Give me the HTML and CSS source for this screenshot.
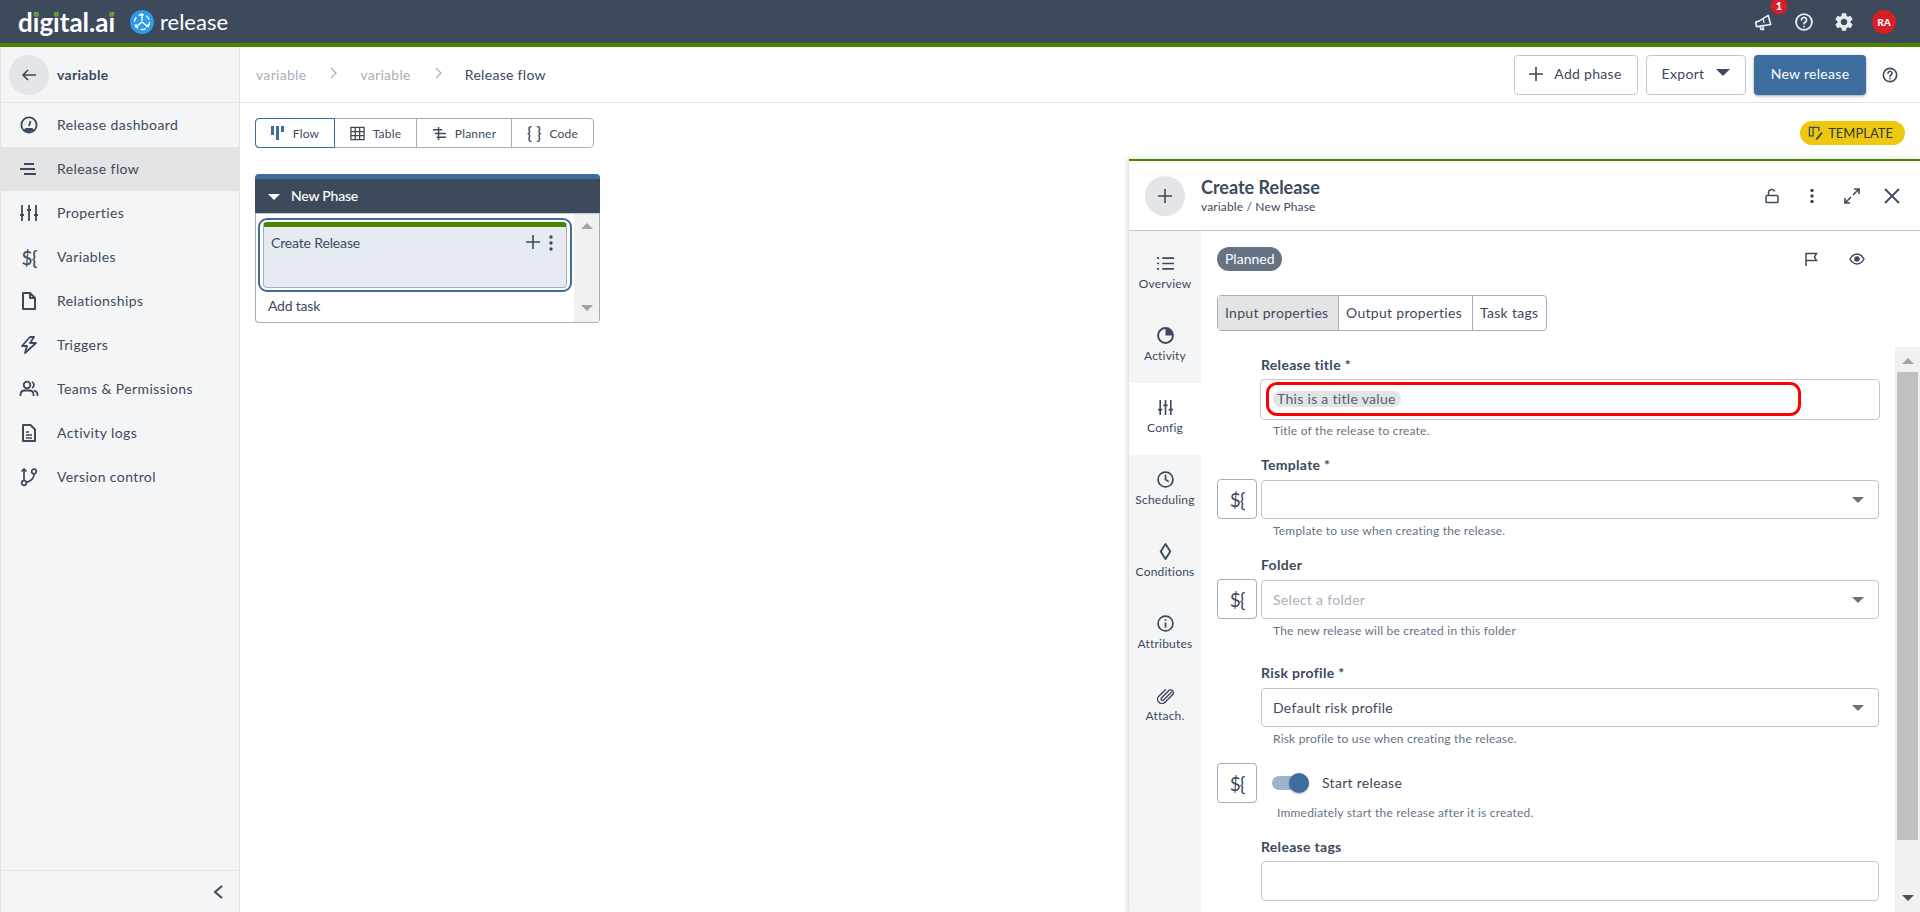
FILE: index.html
```html
<!DOCTYPE html>
<html lang="en">
<head>
    <meta charset="UTF-8">
    <meta name="viewport" content="width=device-width, initial-scale=1.0">
    <title>Release flow</title>
    <link rel="stylesheet" href="styles.css">
</head>
<body>
    <header class="topbar">
        <div class="brand">
            <span class="brand-name">d<span class="i">i</span>g<span class="i">i</span>tal.a<span class="i">i</span></span>
            <svg class="brand-icon" viewBox="0 0 24 24" width="24" height="24">
                <circle cx="12" cy="12" r="12" fill="#2d9bea"/>
                <g fill="none" stroke="#fff" stroke-width="1.4">
                    <circle cx="12" cy="12" r="7.5" stroke-dasharray="5 2.9"/>
                    <path d="M12 4v7M12 12l-5 4M12 12l5 4"/>
                </g>
                <path d="M12 3l2.2 2.6H9.800zM5 17.500l3.300-.6-1.800-2.800zM19 17.500l-3.300-.6 1.800-2.800z" fill="#fff"/>
            </svg>
            <span class="brand-product">release</span>
        </div>
        <div class="topbar-actions">
            <span class="topbar-icon notify">
                <svg viewBox="0 0 24 24" width="20" height="20" fill="none" stroke="#e8ecf1" stroke-width="2" stroke-linejoin="round"><path d="M2 12l4-1 11-7 3 11-13 2-4 .5z"/><path d="M7 17l1.500 4h3l-1.500-4.500"/><path d="M11 8l1 5" stroke-width="1.500"/></svg>
                <span class="notify-badge">1</span>
            </span>
            <span class="topbar-icon">
                <svg viewBox="0 0 24 24" width="20" height="20" fill="none" stroke="#e8ecf1" stroke-width="2.200" stroke-linecap="round"><circle cx="12" cy="12" r="9.500"/><path d="M9 9.500a3 3 0 1 1 4.500 2.600c-1 .6-1.500 1.100-1.500 2.100"/><path d="M12 17.500v.1"/></svg>
            </span>
            <span class="topbar-icon">
                <svg viewBox="0 0 24 24" width="22" height="22" fill="#e8ecf1"><path d="M19.140 12.940c.04-.3.06-.61.06-.94 0-.32-.02-.64-.07-.94l2.030-1.580a.49.49 0 0 0 .12-.61l-1.920-3.320a.488.488 0 0 0-.59-.22l-2.390.96c-.5-.38-1.030-.7-1.620-.94l-.36-2.540a.484.484 0 0 0-.48-.41h-3.840c-.24 0-.43.17-.47.41l-.36 2.540c-.59.24-1.130.57-1.620.94l-2.390-.96c-.22-.08-.47 0-.59.22L2.740 8.870c-.12.21-.08.47.12.61l2.030 1.580c-.05.3-.09.63-.09.94s.02.64.07.94l-2.030 1.580a.49.49 0 0 0-.12.61l1.920 3.320c.12.22.37.29.59.22l2.390-.96c.5.38 1.030.7 1.620.94l.36 2.540c.05.24.24.41.48.41h3.840c.24 0 .44-.17.47-.41l.36-2.540c.59-.24 1.130-.56 1.620-.94l2.390.96c.22.08.47 0 .59-.22l1.920-3.320c.12-.22.07-.47-.12-.61l-2.010-1.580zM12 15.600c-1.980 0-3.600-1.620-3.600-3.600s1.620-3.600 3.600-3.600 3.600 1.620 3.600 3.600-1.620 3.600-3.600 3.600z"/></svg>
            </span>
            <span class="avatar">RA</span>
        </div>
    </header>

    <div class="layout">
        <nav class="sidebar">
            <div class="sidebar-head">
                <span class="back-btn">
                    <svg viewBox="0 0 16 16" width="16" height="16" fill="none" stroke="#3d4a5c" stroke-width="1.600"><path d="M15 8H2M7 3L2 8l5 5"/></svg>
                </span>
                <span class="sidebar-title">variable</span>
            </div>
            <ul class="nav-list">
                <li class="nav-item">
                    <svg viewBox="0 0 20 20" width="20" height="20" fill="none" stroke="#3d4a5c" stroke-width="1.800"><circle cx="10" cy="10" r="7.600"/><path d="M10 11l1.500-5M5.500 9h.1M7 6h.1M14.500 9h.1"/><path d="M4 15a8 6 0 0 0 12 0l-3-2H7z" fill="#3d4a5c" stroke="none"/></svg>
                    <span>Release dashboard</span>
                </li>
                <li class="nav-item active">
                    <svg viewBox="0 0 20 20" width="20" height="20" fill="none" stroke="#3d4a5c" stroke-width="2"><path d="M5 5h10M1 10h15M5 15h12"/></svg>
                    <span>Release flow</span>
                </li>
                <li class="nav-item">
                    <svg viewBox="0 0 20 20" width="20" height="20" fill="none" stroke="#3d4a5c" stroke-width="1.800"><path d="M3 2v16M10 2v16M17 2v16M1 12h4M8 7h4M15 12h4"/></svg>
                    <span>Properties</span>
                </li>
                <li class="nav-item">
                    <span class="var-mark">${</span>
                    <span>Variables</span>
                </li>
                <li class="nav-item">
                    <svg viewBox="0 0 20 20" width="20" height="20" fill="none" stroke="#3d4a5c" stroke-width="2" stroke-linejoin="round"><path d="M4 2h7l5 5v11H4z"/><path d="M11 2v5h5"/></svg>
                    <span>Relationships</span>
                </li>
                <li class="nav-item">
                    <svg viewBox="0 0 20 20" width="20" height="20" fill="none" stroke="#3d4a5c" stroke-width="1.800" stroke-linejoin="round"><path d="M11 2L3 11h5l-2 7 11-10h-6l4-6z"/></svg>
                    <span>Triggers</span>
                </li>
                <li class="nav-item">
                    <svg viewBox="0 0 20 20" width="20" height="20" fill="none" stroke="#3d4a5c" stroke-width="1.800"><circle cx="8" cy="6" r="3.300"/><path d="M1.500 17v-2a4 4 0 0 1 4-3.500h5a4 4 0 0 1 4 3.500v2M13 3a3.300 3.300 0 0 1 0 6M15 11.700a4 4 0 0 1 3.500 3.300v2"/></svg>
                    <span>Teams &amp; Permissions</span>
                </li>
                <li class="nav-item">
                    <svg viewBox="0 0 20 20" width="20" height="20" fill="none" stroke="#3d4a5c" stroke-width="2" stroke-linejoin="round"><path d="M4 2h7.500L16 6.500V18H4z"/><path d="M7 9h3M7 12h6M7 15h6" stroke-width="1.500"/></svg>
                    <span>Activity logs</span>
                </li>
                <li class="nav-item">
                    <svg viewBox="0 0 20 20" width="20" height="20" fill="none" stroke="#3d4a5c" stroke-width="1.700"><circle cx="5" cy="16" r="2.300"/><circle cx="15" cy="4.500" r="2.300"/><path d="M5 13.700V2M2.500 4.500L5 2l2.500 2.500M15 7c0 5-3 7-7.600 8.500"/></svg>
                    <span>Version control</span>
                </li>
            </ul>
            <div class="sidebar-foot">
                <svg viewBox="0 0 12 16" width="12" height="16" fill="none" stroke="#3d4a5c" stroke-width="2"><path d="M10 2L3 8l7 6"/></svg>
            </div>
        </nav>

        <main class="main">
            <div class="crumbbar">
                <div class="crumbs">
                    <span class="crumb">variable</span>
                    <svg class="crumb-sep" viewBox="0 0 8 12" width="8" height="12" fill="none" stroke="#a9b0ba" stroke-width="1.300"><path d="M1 1l5 5-5 5"/></svg>
                    <span class="crumb">variable</span>
                    <svg class="crumb-sep" viewBox="0 0 8 12" width="8" height="12" fill="none" stroke="#a9b0ba" stroke-width="1.300"><path d="M1 1l5 5-5 5"/></svg>
                    <span class="crumb current">Release flow</span>
                </div>
                <div class="actions">
                    <button class="btn add-phase">
                        <svg viewBox="0 0 16 16" width="16" height="16" fill="none" stroke="#3d4a5c" stroke-width="1.600"><path d="M8 1v14M1 8h14"/></svg>
                        Add phase
                    </button>
                    <button class="btn export">Export <span class="caret big"></span></button>
                    <button class="btn primary">New release</button>
                    <svg class="help-icon" viewBox="0 0 24 24" width="16" height="16" fill="none" stroke="#3d4a5c" stroke-width="2.400" stroke-linecap="round"><circle cx="12" cy="12" r="10"/><path d="M9 9.500a3 3 0 1 1 4.500 2.600c-1 .6-1.500 1.100-1.500 2.100"/><path d="M12 17.500v.1"/></svg>
                </div>
            </div>

            <div class="viewbar">
                <div class="view-switch">
                    <span class="view-tab selected">
                        <svg viewBox="0 0 14 16" width="14" height="16" fill="#3d6c9e"><path d="M0 1h3v9H0zM5 1h3v14H5zM10 1h3v6h-3z"/></svg>
                        Flow
                    </span>
                    <span class="view-tab">
                        <svg viewBox="0 0 16 16" width="15" height="15" fill="none" stroke="#3d4a5c" stroke-width="1.400"><path d="M1 1.500h14v13H1zM1 6h14M1 10.300h14M5.600 1.500v13M10.300 1.500v13"/></svg>
                        Table
                    </span>
                    <span class="view-tab">
                        <svg viewBox="0 0 16 16" width="15" height="15" fill="none" stroke="#3d4a5c" stroke-width="1.500"><path d="M7 1v14M1 4h10M3 8h12M5 12h10"/></svg>
                        Planner
                    </span>
                    <span class="view-tab">
                        <span class="braces">{ }</span>
                        Code
                    </span>
                </div>
                <span class="template-badge">
                    <svg viewBox="0 0 16 16" width="15" height="15" fill="none" stroke="#3d4a5c" stroke-width="1.400"><path d="M1.500 1.500h4v9h-4zM5.500 1.500h6v4"/><path d="M14.500 6L9 12.500l-1 2.500 2.500-1L15.500 8z" fill="#3d4a5c" stroke="none"/></svg>
                    TEMPLATE
                </span>
            </div>

            <div class="workspace">
                <section class="phase">
                    <div class="phase-head">
                        <span class="phase-caret"></span>
                        <span>New Phase</span>
                    </div>
                    <div class="phase-body">
                        <div class="phase-tasks">
                            <div class="task-focus">
                                <div class="task-card">
                                    <span>Create Release</span>
                                    <span class="task-tools">
                                        <svg viewBox="0 0 14 14" width="14" height="14" fill="none" stroke="#3d4a5c" stroke-width="1.600"><path d="M7 0v14M0 7h14"/></svg>
                                        <svg viewBox="0 0 4 16" width="4" height="16" fill="#3d4a5c"><circle cx="2" cy="2" r="1.700"/><circle cx="2" cy="8" r="1.700"/><circle cx="2" cy="14" r="1.700"/></svg>
                                    </span>
                                </div>
                            </div>
                            <div class="add-task">Add task</div>
                        </div>
                        <div class="phase-scroll">
                            <span class="arrow-up"></span>
                            <span class="arrow-down"></span>
                        </div>
                    </div>
                </section>

                <aside class="drawer">
                    <div class="drawer-head">
                        <span class="drawer-badge">
                            <svg viewBox="0 0 16 16" width="16" height="16" fill="none" stroke="#3d4a5c" stroke-width="1.600"><path d="M8 1v14M1 8h14"/></svg>
                        </span>
                        <div class="drawer-titles">
                            <div class="drawer-title">Create Release</div>
                            <div class="drawer-sub">variable / New Phase</div>
                        </div>
                        <div class="drawer-tools">
                            <svg viewBox="0 0 16 16" width="16" height="16" fill="none" stroke="#3d4a5c" stroke-width="1.500"><rect x="2" y="7.500" width="12" height="7" rx="1"/><path d="M4.500 7.500V4.500a3.200 3.200 0 0 1 6.200-1"/></svg>
                            <svg viewBox="0 0 16 16" width="16" height="16" fill="#3d4a5c"><circle cx="8" cy="2.500" r="1.700"/><circle cx="8" cy="8" r="1.700"/><circle cx="8" cy="13.500" r="1.700"/></svg>
                            <svg viewBox="0 0 16 16" width="16" height="16" fill="none" stroke="#3d4a5c" stroke-width="1.600"><path d="M9 7l6-6M10 1h5v5M7 9l-6 6M1 10v5h5"/></svg>
                            <svg viewBox="0 0 16 16" width="16" height="16" fill="none" stroke="#3d4a5c" stroke-width="1.800"><path d="M1 1l14 14M15 1L1 15"/></svg>
                        </div>
                    </div>
                    <div class="drawer-main">
                        <div class="side-tabs">
                            <div class="side-tab">
                                <svg viewBox="0 0 16 16" width="17" height="17" fill="none" stroke="#3d4a5c" stroke-width="1.600"><path d="M5 3h11M5 8h11M5 13h11M0 3h2M0 8h2M0 13h2"/></svg>
                                Overview
                            </div>
                            <div class="side-tab">
                                <svg viewBox="0 0 16 16" width="17" height="17" fill="none" stroke="#3d4a5c" stroke-width="1.800"><circle cx="8" cy="8" r="7"/><path d="M8 1a7 7 0 0 1 7 7H8z" fill="#3d4a5c" stroke="none"/></svg>
                                Activity
                            </div>
                            <div class="side-tab current">
                                <svg viewBox="0 0 16 16" width="17" height="17" fill="none" stroke="#3d4a5c" stroke-width="1.500"><path d="M3 1v14M8 1v14M13 1v14M1 10h4M6 6h4M11 10h4"/></svg>
                                Config
                            </div>
                            <div class="side-tab">
                                <svg viewBox="0 0 16 16" width="17" height="17" fill="none" stroke="#3d4a5c" stroke-width="1.600"><circle cx="8" cy="8" r="7"/><path d="M8 3.500V8l3 2"/></svg>
                                Scheduling
                            </div>
                            <div class="side-tab">
                                <svg viewBox="0 0 16 16" width="17" height="17" fill="none" stroke="#3d4a5c" stroke-width="1.800" stroke-linejoin="round"><path d="M8 1l4.500 7L8 15 3.500 8z"/></svg>
                                Conditions
                            </div>
                            <div class="side-tab">
                                <svg viewBox="0 0 16 16" width="17" height="17" fill="none" stroke="#3d4a5c" stroke-width="1.600"><circle cx="8" cy="8" r="7"/><path d="M8 7v5M8 4v1.500"/></svg>
                                Attributes
                            </div>
                            <div class="side-tab">
                                <svg viewBox="0 0 16 16" width="17" height="17" fill="none" stroke="#3d4a5c" stroke-width="1.300" stroke-linecap="round"><path d="M13.500 5L6 12.500a1.500 1.500 0 0 1-2-2L11.500 3a2.700 2.700 0 0 1 3.500 3.800L7.500 14.300a4 4 0 0 1-5.800-5.600L8 2.500"/></svg>
                                Attach.
                            </div>
                        </div>
                        <div class="drawer-content">
                            <div class="status-row">
                                <span class="status-pill">Planned</span>
                                <span class="status-tools">
                                    <svg viewBox="0 0 16 16" width="16" height="16" fill="none" stroke="#3d4a5c" stroke-width="1.500"><path d="M3 15V2.500h10.500l-2 3.500 2 3.500H3"/></svg>
                                    <svg viewBox="0 0 16 16" width="16" height="16" fill="none" stroke="#3d4a5c" stroke-width="1.500"><path d="M1 8c2-3.500 4.500-5 7-5s5 1.500 7 5c-2 3.500-4.500 5-7 5s-5-1.500-7-5z"/><circle cx="8" cy="8" r="2" fill="#3d4a5c"/></svg>
                                </span>
                            </div>
                            <div class="prop-tabs">
                                <span class="prop-tab selected">Input properties</span>
                                <span class="prop-tab">Output properties</span>
                                <span class="prop-tab">Task tags</span>
                            </div>
                            <div class="form-area">
                                <form class="form">
                                    <div class="field">
                                        <label class="field-label">Release title *</label>
                                        <div class="title-input">
                                            <div class="title-mark"><span class="value-chip">This is a title value</span></div>
                                        </div>
                                        <div class="field-help">Title of the release to create.</div>
                                    </div>
                                    <div class="field">
                                        <label class="field-label">Template *</label>
                                        <span class="var-btn">${</span>
                                        <div class="select-box"><span class="caret"></span></div>
                                        <div class="field-help">Template to use when creating the release.</div>
                                    </div>
                                    <div class="field">
                                        <label class="field-label">Folder</label>
                                        <span class="var-btn">${</span>
                                        <div class="select-box"><span class="placeholder">Select a folder</span><span class="caret"></span></div>
                                        <div class="field-help">The new release will be created in this folder</div>
                                    </div>
                                    <div class="field risk">
                                        <label class="field-label">Risk profile *</label>
                                        <div class="select-box"><span>Default risk profile</span><span class="caret"></span></div>
                                        <div class="field-help">Risk profile to use when creating the release.</div>
                                    </div>
                                    <div class="field start">
                                        <span class="var-btn">${</span>
                                        <div class="switch-row">
                                            <span class="switch"><span class="switch-knob"></span></span>
                                            <span class="switch-label">Start release</span>
                                        </div>
                                        <div class="field-help start-help">Immediately start the release after it is created.</div>
                                    </div>
                                    <div class="field">
                                        <label class="field-label">Release tags</label>
                                        <div class="tags-input"></div>
                                    </div>
                                </form>
                                <div class="form-scroll">
                                    <span class="arrow-up"></span>
                                    <span class="scroll-thumb"></span>
                                    <span class="arrow-down dark"></span>
                                </div>
                            </div>
                        </div>
                    </div>
                </aside>
            </div>
        </main>
    </div>
</body>
</html>
```

FILE: styles.css
```css
* { box-sizing: border-box; }
html, body { height: 100%; }
body { margin: 0; height: 912px; overflow: hidden; font-family: Lato, "Open Sans", sans-serif; font-size: 14px; color: #3d4a5c; background: #fff; letter-spacing: 0.3px; }
ul { list-style: none; margin: 0; padding: 0; }
svg { flex: none; display: block; }

/* top bar */
.topbar { display: flex; justify-content: space-between; height: 47px; background: #3d4a5c; border-bottom: 4px solid #4c8400; }
.brand { display: flex; align-items: center; padding-left: 18px; color: #fff; }
.brand-name { font-size: 26px; font-weight: 700; letter-spacing: 0; width: 100px; line-height: 30px; }
.brand-name .i { position: relative; }
.brand-name .i::after { content: ""; position: absolute; left: 50%; top: 6px; width: 5px; height: 5px; margin-left: -2.5px; border-radius: 50%; background: #5d9a2d; }
.brand-icon { margin-left: 12px; }
.brand-product { margin-left: 6px; font-size: 22px; letter-spacing: 0; line-height: 30px; }
.topbar-actions { display: flex; align-items: center; padding-right: 24px; }
.topbar-icon { position: relative; display: flex; justify-content: center; width: 40px; }
.notify-badge { position: absolute; left: 27px; top: -14px; width: 16px; height: 16px; border-radius: 50%; background: #d61f26; color: #fff; font-size: 11px; font-weight: 900; line-height: 16px; text-align: center; letter-spacing: 0; box-shadow: 0 0 4px rgba(214, 31, 38, 0.6); }
.avatar { width: 24px; height: 24px; margin-left: 8px; border-radius: 50%; background: #d61f26; color: #fff; font-size: 10px; font-weight: 900; line-height: 24px; text-align: center; letter-spacing: 0; }

/* layout */
.layout { display: flex; height: 865px; }
.sidebar { display: flex; flex-direction: column; width: 240px; background: #f3f5f7; border-left: 1px solid #e3e5e8; border-right: 1px solid #e3e5e8; }
.sidebar-head { display: flex; align-items: center; height: 56px; padding-left: 8px; border-bottom: 1px solid #e3e5e8; }
.back-btn { display: flex; align-items: center; justify-content: center; width: 40px; height: 40px; border-radius: 50%; background: #e3e5e8; }
.sidebar-title { margin-left: 8px; font-weight: 700; }
.nav-list { flex: 1; }
.nav-item { display: flex; align-items: center; gap: 18px; height: 44px; padding-left: 18px; letter-spacing: 0.4px; }
.nav-item span:last-child { position: relative; top: -1px; }
.nav-item.active { background: #e3e4e6; }
.var-mark { width: 20px; font-size: 19px; font-weight: 500; text-align: center; letter-spacing: -1px; }
.sidebar-foot { display: flex; justify-content: flex-end; align-items: center; height: 42px; padding-right: 15px; border-top: 1px solid #e3e5e8; }

/* main column */
.main { display: flex; flex-direction: column; flex: 1; min-width: 0; }
.crumbbar { display: flex; justify-content: space-between; align-items: center; height: 56px; padding: 0 22px 0 16px; border-bottom: 1px solid #e3e5e8; }
.crumbs { display: flex; align-items: center; }
.crumb { color: #a9b0ba; }
.crumb.current { color: #3d4a5c; }
.crumb-sep { margin: 0 22px 0 24px; position: relative; top: -2px; }
.actions { display: flex; align-items: center; gap: 8px; }
.btn { display: flex; align-items: center; justify-content: center; height: 40px; padding: 0 0 2px; border: 1px solid #c3c8cf; border-radius: 4px; background: #fff; color: #3d4a5c; font: inherit; letter-spacing: 0.3px; }
.btn.add-phase { gap: 10px; width: 124px; padding-right: 2px; }
.btn.export { gap: 12px; width: 100px; }
.btn.primary { width: 112px; border: 0; background: #3d6c9e; color: #fff; box-shadow: 0 1px 3px rgba(61, 74, 92, 0.5); }
.help-icon { margin-left: 8px; }
.caret { width: 0; height: 0; margin-left: auto; border-left: 6px solid transparent; border-right: 6px solid transparent; border-top: 6px solid #707070; }
.caret.big { position: relative; top: -1px; margin-left: 0; border-left-width: 7px; border-right-width: 7px; border-top: 7px solid #3d4a5c; }

.viewbar { display: flex; justify-content: space-between; align-items: center; height: 56px; padding: 4px 15px 0 15px; }
.view-switch { display: flex; height: 30px; border: 1px solid #a5adb9; border-radius: 4px; }
.view-tab { display: flex; align-items: center; justify-content: center; gap: 8px; font-size: 12px; letter-spacing: 0.2px; border-left: 1px solid #a5adb9; }
.view-tab:nth-child(1) { width: 80px; margin: -1px 0 -1px -1px; border: 1px solid #3d6c9e; border-radius: 4px 0 0 4px; }
.view-tab:nth-child(2) { width: 81px; border-left: 0; }
.view-tab:nth-child(3) { width: 95px; }
.view-tab:nth-child(4) { width: 82px; }
.braces { font-size: 17px; line-height: 16px; letter-spacing: 0; font-weight: 500; }
.template-badge { display: flex; align-items: center; gap: 5px; height: 24px; padding: 0 12px 0 8px; border-radius: 12px; background: #eec80f; color: #2f3a28; font-size: 13px; letter-spacing: 0; }

.workspace { display: flex; justify-content: space-between; align-items: flex-start; flex: 1; min-height: 0; padding-left: 15px; }

/* phase column */
.phase { width: 345px; margin-top: 15px; }
.phase-head { display: flex; align-items: center; gap: 11px; height: 39px; padding: 0 0 0 13px; background: #3d4a5c; border-top: 5px solid #3d6c9e; border-radius: 4px 4px 0 0; color: #fff; letter-spacing: -0.2px; font-weight: 500; }
.phase-head span:last-child { position: relative; top: -1px; }
.phase-caret { width: 0; height: 0; margin-top: 2px; border-left: 6px solid transparent; border-right: 6px solid transparent; border-top: 6px solid #fff; }
.phase-body { display: flex; height: 110px; border: 1px solid #a5adb9; border-top-color: #c3c8cf; border-radius: 0 0 4px 4px; }
.phase-tasks { flex: 1; padding: 4px 2px 0 2px; }
.task-focus { height: 74px; padding: 2px; border: 2px solid #3d6c9e; border-radius: 9px; }
.task-card { display: flex; justify-content: space-between; height: 66px; padding: 7px 13px 0 7px; margin: 0 1px; background: #e6ebf2; border: 1px solid #a5adb9; border-top: 5px solid #4c8400; border-radius: 4px; letter-spacing: -0.15px; }
.task-tools { display: flex; gap: 9px; height: 16px; margin-top: 1px; }
.add-task { padding: 5px 0 0 10px; letter-spacing: -0.2px; }
.phase-scroll { display: flex; flex-direction: column; justify-content: space-between; align-items: center; width: 25px; padding: 9px 0 11px; background: #f1f1f1; }
.arrow-up { width: 0; height: 0; border-left: 6px solid transparent; border-right: 6px solid transparent; border-bottom: 6px solid #a3a3a3; }
.arrow-down { width: 0; height: 0; border-left: 6px solid transparent; border-right: 6px solid transparent; border-top: 6px solid #a3a3a3; }
.arrow-down.dark { border-top-color: #505050; }

/* task drawer */
.drawer { display: flex; flex-direction: column; width: 791px; height: 753px; background: #fff; border-top: 2px solid #4c8400; box-shadow: -2px 0 4px rgba(61, 74, 92, 0.18); }
.drawer-head { display: flex; align-items: center; flex: none; height: 70px; padding: 0 20px 0 16px; border-bottom: 1px solid #c3c8cf; }
.drawer-badge { display: flex; align-items: center; justify-content: center; width: 40px; height: 40px; border-radius: 50%; background: #e3e5e8; }
.drawer-titles { flex: 1; margin-left: 16px; padding-top: 1px; }
.drawer-title { font-size: 18px; font-weight: 700; line-height: 22px; letter-spacing: 0; }
.drawer-sub { font-size: 12px; line-height: 18px; letter-spacing: 0.15px; }
.drawer-tools { display: flex; gap: 24px; }
.drawer-main { display: flex; flex: 1; min-height: 0; }
.side-tabs { width: 72px; padding-top: 8px; background: #f3f5f7; }
.side-tab { display: flex; flex-direction: column; align-items: center; gap: 4px; height: 72px; padding-top: 16px; font-size: 12px; letter-spacing: 0.2px; }
.side-tab.current { background: #fff; }
.drawer-content { display: flex; flex-direction: column; flex: 1; min-width: 0; }
.status-row { display: flex; justify-content: space-between; align-items: center; height: 24px; margin-top: 16px; padding: 0 55px 0 16px; }
.status-pill { height: 24px; padding: 0 8px; border-radius: 12px; background: #667385; color: #fff; line-height: 23px; letter-spacing: 0; }
.status-tools { display: flex; gap: 30px; }
.prop-tabs { display: flex; align-self: flex-start; height: 36px; margin: 24px 0 16px 16px; border: 1px solid #a5adb9; border-radius: 4px; }
.prop-tab { padding: 0 7px; line-height: 33px; border-left: 1px solid #a5adb9; white-space: nowrap; }
.prop-tab:first-child { width: 120px; border-left: 0; background: #e3e4e6; }
.prop-tab:nth-child(2) { width: 134px; }
.prop-tab:nth-child(3) { width: 74px; }

/* config form */
.form-area { display: flex; flex: 1; min-height: 0; }
.form { flex: 1; padding: 8px 16px 0 16px; overflow: hidden; }
.field { display: grid; grid-template-columns: 44px 1fr; margin-bottom: 16px; }
.field.risk { margin-top: 24px; }
.field-label { grid-column: 2; font-weight: 700; line-height: 20px; }
.title-input { grid-column: 2; height: 41px; margin: 4px -1px 0 -1px; border: 1px solid #c3c8cf; border-radius: 4px; }
.title-mark { display: flex; align-items: center; width: 535px; height: 34px; margin: 2px 5px; padding-left: 4px; border: 3px solid #f00; border-radius: 11px; }
.value-chip { height: 16px; padding: 0 5px 0 4px; border-radius: 8px; background: #e3e4e6; line-height: 16px; color: #55606e; }
.field-help { grid-column: 2; margin-top: 3px; padding-left: 12px; font-size: 12px; line-height: 16px; color: #667385; letter-spacing: 0.2px; }
.start-help { padding-left: 16px; margin-top: 2px; }
.var-btn { grid-column: 1; align-self: start; display: flex; align-items: center; justify-content: center; width: 40px; height: 40px; margin-top: 4px; border: 1px solid #a5adb9; border-radius: 4px; font-size: 19px; letter-spacing: -1px; }
.select-box { grid-column: 2; display: flex; justify-content: space-between; align-items: center; height: 39px; margin: 5px 0 1px; padding: 0 14px 0 11px; border: 1px solid #c3c8cf; border-radius: 4px; }
.placeholder { color: #a9b0ba; }
.tags-input { grid-column: 2; height: 40px; margin-top: 4px; border: 1px solid #c3c8cf; border-radius: 4px; }
.field.start .var-btn { margin-top: 0; }
.switch-row { grid-column: 2; display: flex; align-items: center; gap: 13px; padding-left: 11px; }
.switch-label { position: relative; top: -1px; }
.switch { display: flex; align-items: center; justify-content: flex-end; width: 37px; height: 14px; border-radius: 7px; background: #9cb4d0; }
.switch-knob { width: 20px; height: 20px; margin-right: 0; border-radius: 50%; background: #3d6c9e; box-shadow: 0 1px 2px rgba(0, 0, 0, 0.3); flex: none; }

.form-scroll { display: flex; flex-direction: column; align-items: center; width: 25px; height: 565px; padding: 11px 0 11px 0; background: #f1f1f1; }
.scroll-thumb { width: 21px; height: 468px; margin: 8px 0 auto; background: #c0c0c0; }
```
